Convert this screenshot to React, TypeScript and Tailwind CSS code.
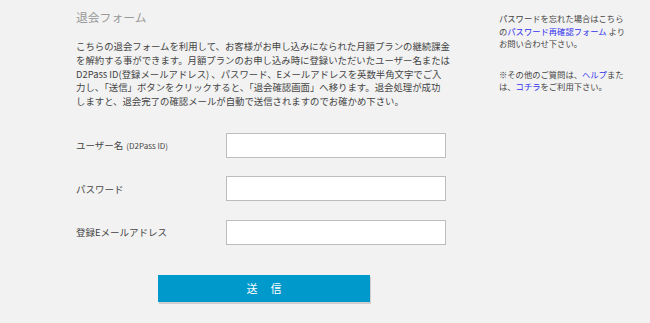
const jp = "font-['Meiryo','Noto_Sans_CJK_JP',sans-serif]";

function Field({ label, sub }: { label: string; sub?: string }) {
  return (
    <div className="flex items-center h-[25px]">
      <label className="w-[150px] shrink-0 text-[9.5px] text-[#444]">
        {label}
        {sub && <span className="text-[8px] ml-[3px]">{sub}</span>}
      </label>
      <input
        type="text"
        className="w-[220px] h-[25px] shrink-0 bg-white border border-[#bdbdbd] outline-none"
      />
    </div>
  );
}

export default function App() {
  return (
    <div className={`w-[650px] h-[323px] bg-[#f2f2f2] overflow-hidden ${jp}`}>
      <div className="flex">
        {/* Main form */}
        <div className="w-[470px] pl-[76px] pt-[9px] shrink-0">
          <h2 className="text-[11.8px] text-[#999] leading-[16px]">退会フォーム</h2>
          <p className="mt-[15px] whitespace-nowrap text-[9.4px] leading-[13.75px] text-[#444]">
            こちらの退会フォームを利用して、お客様がお申し込みになられた月額プランの継続課金
            <br />
            を解約する事ができます。月額プランのお申し込み時に登録いただいたユーザー名または
            <br />
            D2Pass ID(登録メールアドレス) 、パスワード、Eメールアドレスを英数半角文字でご入
            <br />
            力し、「送信」ボタンをクリックすると、「退会確認画面」へ移ります。退会処理が成功
            <br />
            しますと、退会完了の確認メールが自動で送信されますのでお確かめ下さい。
          </p>

          <div className="mt-[24px] flex flex-col gap-[18.5px]">
            <Field label="ユーザー名" sub="(D2Pass ID)" />
            <Field label="パスワード" />
            <Field label="登録Eメールアドレス" />
          </div>

          <div className="mt-[29px] pl-[82px]">
            <button className="w-[212px] h-[27px] bg-[#0099cc] text-white text-[11px] tracking-[1.2em] pl-[1.2em] shadow-[1px_2px_0_#cfcfcf]">
              送信
            </button>
          </div>
        </div>

        {/* Sidebar */}
        <div className="pl-[29px] pt-[12px] whitespace-nowrap text-[8.3px] leading-[12.5px] text-[#444]">
          <p>
            パスワードを忘れた場合はこちら
            <br />
            の<a className="text-[#3333ee]">パスワード再確認フォーム</a> より
            <br />
            お問い合わせ下さい。
          </p>
          <p className="mt-[18px]">
            ※その他のご質問は、<a className="text-[#3333ee]">ヘルプ</a>また
            <br />
            は、<a className="text-[#3333ee]">コチラ</a>をご利用下さい。
          </p>
        </div>
      </div>
    </div>
  );
}
